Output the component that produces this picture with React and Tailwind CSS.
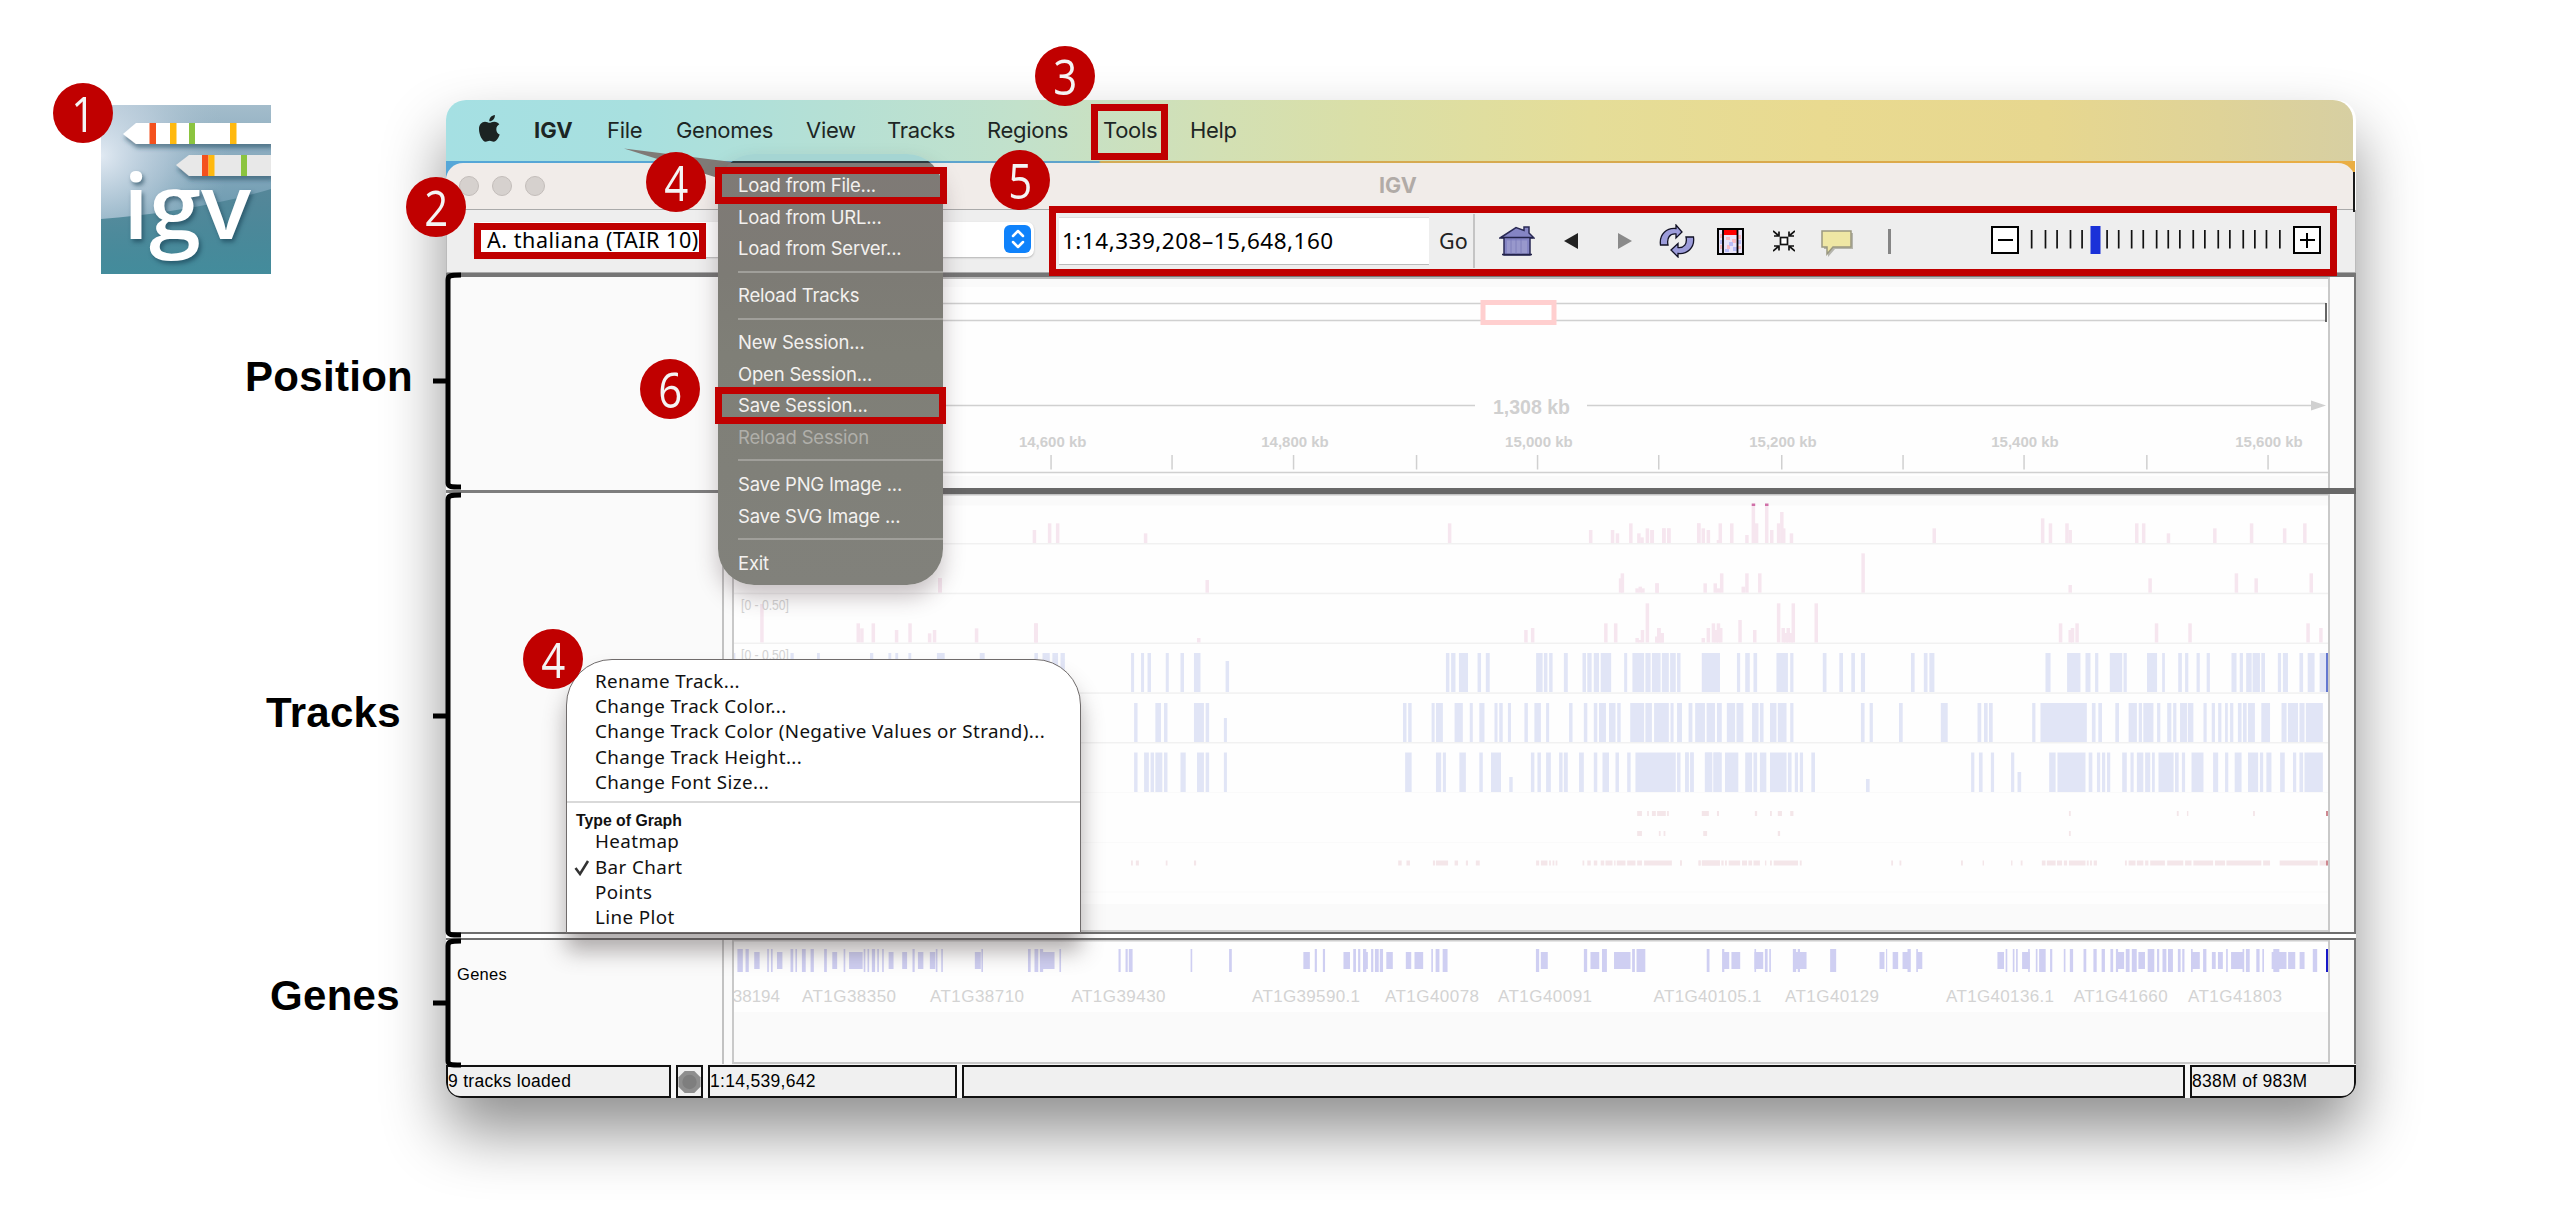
import React from "react";

const ARIAL = "font-['Liberation_Sans',Arial,sans-serif]";
const INTER = "font-[Inter,sans-serif]";
const NOTO = "font-['Noto_Sans','Open_Sans',sans-serif]";

/* ---------- track data: "start-end" spans, optional "@top" ---------- */
const spans = (s) =>
  s.split(",").map((p) => {
    const [r, t] = p.trim().split("@");
    const [a, b] = r.split("-").map(Number);
    return { a, b, t: t ? Number(t) : null };
  });

function Spans({ data, top, bottom, x0, k, fill }) {
  return (
    <g transform={`translate(${x0} 0) scale(${k} 1)`} fill={fill}>
      {spans(data).map((s, i) => {
        const y = s.t ?? top;
        return <rect key={i} x={s.a} y={y} width={s.b - s.a} height={bottom - y} />;
      })}
    </g>
  );
}

function Peaks({ data, bottom, x0, k }) {
  return (
    <g fill="#f6e6ef">
      {data.map(([x, y], i) => (
        <rect key={i} x={x0 + x * k - 1.7} y={380 + y / 3} width="3.5" height={bottom - 380 - y / 3} />
      ))}
    </g>
  );
}

const KA = 0.43367;
const KB = 0.45918;
const KC = 0.44643;

const P1L = [[77,450],[111,430],[129,430],[326,460],[1007,430],[1323,450],[1372,450],[1383,460],[1413,430],[1431,460],[1438,472],[1450,445],[1461,450],[1487,445],[1498,445],[1565,430]];
const P1R = [[4,450],[30,445],[41,445],[106,430],[116,445],[127,450],[149,480],[153,430],[178,430],[211,465],[225,376],[232,430],[254,376],[265,450],[280,430],[287,396],[291,445],[308,460],[619,445],[855,415],[872,430],[908,430],[915,450],[1060,430],[1075,430],[1129,460],[1230,445],[1310,430],[1382,445],[1426,430]];
const P2L = [[464,600],[1390,595],[1394,580],[1427,625],[1434,620],[1440,625],[1472,610]];
const P2R = [[15,610],[120,610],[142,610],[149,625],[156,580],[203,620],[211,580],[239,580],[464,520],[915,615],[1089,595],[1277,580],[1320,595],[1440,580]];
const P3L = [[81,730],[445,774],[1178,750],[1193,744],[1357,730],[1379,730],[1427,774],[1433,780],[1439,750],[1450,670],[1471,770],[1476,744],[1483,759]];
const P3R = [[15,770],[19,744],[26,759],[116,774],[127,744],[138,730],[144,750],[149,730],[154,744],[196,720],[228,750],[280,670],[290,744],[296,759],[301,744],[307,759],[312,670],[362,670],[894,730],[915,750],[920,744],[930,730],[1103,730],[1176,730],[1433,730],[1461,744]];
const P3X = [[887,792],[1123,850],[1132,865],[1160,850],[1217,870],[1250,850],[1298,880],[1310,870],[1413,865],[1558,850]];

const B1L = "210-217,233-240,248-256,290-297,324-332,355-370,428-436@661,936-944,948-958,966-987,1009-1017,1028-1037,1144-1159,1162-1170,1174-1182,1208-1217,1251-1259,1262-1272,1277-1289,1293-1317,1347-1354,1366-1393,1396-1408,1411-1431,1434-1450,1453-1466,1469-1477,1526-1568";
const B1R = "48-87,124-131,142-152,160-168,210-235,240-247,311-319,347-355,373-381,394-403,503-511,531-539,543-554,796-807,843-872,883-894,904-911,936-963,966-973,1017-1039,1050-1056,1085-1093,1100-1107,1125-1132,1147-1154,1201-1212,1219-1226,1233-1245,1247-1263,1266-1274,1302-1309,1313-1324,1349-1357,1367-1382,1393-1408";
const B1X = "818-822,957-965,1022-1029,1152-1160,1197-1204,1214-1221,1246-1253,1316-1335,1421-1433,1575-1592,1599-1610,1619-1629";
const B1Y = "77-85,96-111,119-130,137-145";
const B2L = "217-225,266-279,286-294,355-378,382-390,424-431@718,837-845,849-857,903-910,913-929,956-975,991-998,1013-1025,1048-1055,1059-1067,1079-1086,1117-1125,1140-1155,1167-1174,1220-1228,1254-1262,1277-1285,1289-1305,1312-1327,1331-1339,1361-1393,1396-1411,1416-1450,1454-1461,1469-1480,1496-1503,1511-1533,1538-1556,1561-1568";
const B2R = "0-4,19-27,34-54,58-76,81-91,102-120,123-138,157-171,174-182,196-210,213-232,240-247,394-402,413-420,477-485,568-583,648-656,662-670,673-681,767-774,785-886,897-905,911-919,948-956,977-995,999-1006,1009-1031,1039-1046,1061-1070,1074-1081,1089-1104,1106-1118,1140-1147,1158-1165,1172-1179,1187-1193,1198-1205,1215-1223,1226-1234,1237-1252,1266-1285,1310-1321,1324-1346,1349-1360,1363-1400";
const B3L = "217-225,240-251,255-263,266-282,286-294,324-336,362-378,382-390,424-431,842-857,913-925,929-936,967-982,1013-1021,1040-1063,1082-1090@777,1132-1140,1147-1155,1167-1178,1197-1205,1208-1217,1243-1254,1277-1285,1297-1312,1327-1335,1354-1362,1373-1466,1469-1477,1488-1496,1500-1507,1533-1550,1553-1568";
const B3R = "11-19,22-30,55-70,73-91,98-127,142-157,160-168,174-188,196-232,235-243,250-257,261-268,286-294,405-413@779,634-641,651-659,677-684,721-728,735-743@772,804-818,822-883,890-898,908-915,919-926,930-937,963-973,981-988,995-1009,1013-1024,1028-1034,1042-1075,1078-1086,1093-1100,1114-1140,1161-1172,1187-1194,1208-1223,1237-1259,1263-1270,1277-1288,1307-1317,1335-1342,1349-1357,1360-1400";
const RAL = "1377-1388,1400-1404,1411-1420,1423-1443,1446-1450,1526-1542,1561-1564";
const RAR = "48-62,81-85,163-168,196-200,213-222,240-247,847-851,1082-1086,1104-1107,1248-1252";
const RBL = "1377-1388,1427-1431,1438-1442,1530-1538";
const RBR = "51-59,213-218,847-851";
const RCL = "210-214,221-228,290-294,355-360,826-834,845-853,906-911,913-941,956-964,982-987,1005-1014,1144-1151,1155-1170,1174-1178,1182-1186,1189-1193,1251-1255,1262-1270,1277-1285,1293-1301,1304-1320,1324-1327,1330-1350,1354-1373,1377-1388,1393-1457,1476-1480,1519-1523,1526-1568";
const RCR = "0-4,40-45,48-87,90-95,98-102,106-131,135-146,149-157,160-174,185-188,196-200,204-257,261-265,460-464,478-482,612-616,659-662,721-724,742-746,788-796,799-818,821-832,836-843,847-883,886-890,893-897,901-908,969-973,977-992,995-1009,1013-1020,1024-1056,1061-1096,1100-1114,1118-1161,1165-1187,1190-1266,1270-1285,1306-1389,1393-1410";

const GTL = "69-79,84-90,124-127,131-134,167-172,176-179,188-195,204-210,229-234,265-268,302-305,309-312,317-323,327-330,336-339,392-396,435-438,445-448,519-522,605-610,617-624,627-633,663-666,772-776,785-789,791-798,905-908,976-981,1134-1138,1149-1153,1205-1210,1214-1218,1223-1229,1238-1242,1245-1252,1254-1260,1349-1352,1357-1364,1370-1379,1542-1548";
const GSL = "100-110,142-152,244-253,275-300,348-357,373-382,402-412,424-434,507-518,628-654,1113-1125,1187-1199,1225-1232,1266-1278,1302-1312,1318-1334,1551-1563";
const GTR = "80-86,113-122,168-173,176-192,304-309,332-336,391-394,410-415,418-421,461-467,470-474,529-540,631-633,670-676,686-689,849-852,862-865,868-871,890-893,904-907,910-922,930-934,955-958,966-972,991-996,1009-1015,1024-1030,1040-1045,1050-1054,1068-1075,1079-1088,1108-1120,1125-1129,1135-1142,1145-1154,1163-1168,1171-1175,1187-1190,1209-1215,1251-1254,1281-1284,1287-1294,1306-1312,1317-1320,1337-1348,1409-1417";
const GSR = "2-14,92-108,135-165,333-345,349-365,391-407,463-486,619-628,643-653,661-675,687-697,834-846,879-893,1053-1065,1091-1103,1187-1203,1225-1232,1236-1245,1260-1282,1334-1361,1364-1377,1385-1394";

const GENES = [["AT1G38350",802],["AT1G38710",930],["AT1G39430",1071.5],["AT1G39590.1",1252],["AT1G40078",1385],["AT1G40091",1498],["AT1G40105.1",1653.5],["AT1G40129",1785],["AT1G40136.1",1946],["AT1G41660",2073.7],["AT1G41803",2188]];

/* ---------- annotations ---------- */
function Badge({ n, at }) {
  return (
    <div className={`absolute flex size-[60px] items-center justify-center rounded-full bg-[#c00000] ${at}`}>
      <span className="block scale-x-[0.84] font-['Open_Sans',sans-serif] text-[50px] leading-[58px] text-[#f4f4f4]">{n}</span>
    </div>
  );
}

const Frame = ({ at }) => <div className={`absolute border-[7px] border-[#c00000] ${at}`} />;

const Label = ({ children, at }) => (
  <div className={`absolute text-[42px] leading-[48px] font-bold tracking-[0.3px] text-black ${ARIAL} ${at}`}>{children}</div>
);

function Bracket({ h, tick, at }) {
  return (
    <svg className={`absolute ${at}`} width="30" height={h} viewBox={`0 0 30 ${h}`} fill="none" stroke="#000" strokeWidth="5">
      <path d={`M28 3 C17 3 15 3.500 15 8 V${h - 7} C15 ${h - 3} 18 ${h - 3} 28 ${h - 3} M0 ${tick} H15`} />
    </svg>
  );
}

function Logo() {
  return (
    <div className="absolute left-[101px] top-[105px] h-[169px] w-[170px] overflow-hidden">
      <svg width="170" height="169" viewBox="0 0 170 169">
        <defs>
          <linearGradient id="sky" x1="0" y1="0" x2="0" y2="1">
            <stop offset="0" stopColor="#a3bccb" />
            <stop offset="0.35" stopColor="#86a9bd" />
            <stop offset="0.62" stopColor="#6d9bb0" />
            <stop offset="1" stopColor="#468b9d" />
          </linearGradient>
          <radialGradient id="glow" cx="0" cy="0.3" r="0.75">
            <stop offset="0" stopColor="#eaf0f8" stopOpacity="0.9" />
            <stop offset="0.5" stopColor="#c8d6e4" stopOpacity="0.55" />
            <stop offset="1" stopColor="#a5becd" stopOpacity="0" />
          </radialGradient>
          <linearGradient id="sea" x1="0" y1="0" x2="0" y2="1">
            <stop offset="0" stopColor="#4f8294" stopOpacity="0.85" />
            <stop offset="1" stopColor="#438c9c" />
          </linearGradient>
          <filter id="soft" x="-10%" y="-20%" width="130%" height="160%">
            <feDropShadow dx="1" dy="4" stdDeviation="2" floodColor="#234a60" floodOpacity="0.55" />
          </filter>
        </defs>
        <rect width="170" height="169" fill="url(#sky)" />
        <rect width="170" height="169" fill="url(#glow)" />
        <path d="M0 114 C50 110 110 102 170 84 V169 H0Z" fill="url(#sea)" />
        <g filter="url(#soft)">
          <path d="M22 29 L35 18 H171 V39 H35Z" fill="#fff" />
          <path d="M75 60 L88 50 H171 V71 H88Z" fill="#e8e8e8" />
        </g>
        <g>
          <path d="M48.500 18h6.500v21h-6.500zM101 50h6.500v21h-6.500z" fill="#f4511e" />
          <path d="M69 18h6.500v21h-6.500zM129 18h6.500v21h-6.500zM107.500 50h6v21h-6z" fill="#ffb90f" />
          <path d="M88 18h6v21h-6zM140 50h6v21h-6z" fill="#8bc43f" />
        </g>
      </svg>
      <span className="absolute left-[22px] top-[42px] origin-left scale-x-[1.04] font-['Open_Sans',sans-serif] text-[90px] leading-[114px] font-semibold tracking-[0px] text-white [text-shadow:2px_3px_4px_rgba(20,60,80,0.6)]">igv</span>
    </div>
  );
}

/* ---------- window chrome ---------- */
function MenuBar() {
  const items = [["File","w-[69px]"],["Genomes","w-[130px]"],["View","w-[81px]"],["Tracks","w-[100px]"],["Regions","w-[116px]"],["Tools","w-[87px]"],["Help","w-[60px]"]];
  return (
    <nav className={`flex h-[61px] w-[1907px] items-center rounded-t-[20px] bg-[linear-gradient(90deg,#a5e0e3_0%,#a8e0df_10%,#b5e0d5_20%,#c2e1cb_30%,#d2e0b5_40%,#dadfa7_48%,#e5dd98_60%,#e9da90_72%,#e7d78f_84%,#dfd398_93%,#d7cfa2_100%)] text-[22px] tracking-[-0.3px] text-[#1d2624] ${INTER}`}>
      <svg className="ml-[33px] mb-[4px]" width="21" height="27" viewBox="0 0 21 27" fill="#1c2322">
        <path d="M17.300 14.200c0-2.400 1.300-3.800 3-4.900-1.100-1.600-2.800-2.500-5-2.600-1.900-.1-3.600 1.100-4.700 1.100S7.700 6.700 6 6.700C2.800 6.800 0 9.500 0 14.200c0 5 3.300 12.500 6.700 12.500 1.500 0 2.200-1 4-1s2.300 1 4 1c2.600 0 4.900-3.800 6-7.200-2.200-.8-3.400-2.800-3.400-5.300zM14.400 4.500C15.500 3.200 16 1.700 15.900 0c-1.600.1-3.200 1-4.200 2.100-1 1.200-1.500 2.700-1.400 4.200 1.600.1 3.100-.7 4.100-1.800z" />
      </svg>
      <span className="ml-[34px] w-[73px] font-bold tracking-[0px]">IGV</span>
      {items.map(([t, w]) => (
        <span key={t} className={`${w} whitespace-nowrap`}>{t}</span>
      ))}
    </nav>
  );
}

function TitleBar() {
  return (
    <div className="flex h-[49px] w-[1909px] bg-[linear-gradient(90deg,#55a7d8_0%,#5fa3cb_34.2%,#d3ab55_34.300%,#d9a94c_70%,#eaae44_100%)] pt-[2px]">
      <div className={`flex flex-1 items-center rounded-t-[17px] border-b border-[#aaa] bg-[#f1ece9] ${INTER}`}>
        <div className="ml-[13px] flex gap-[13px]">
          {[0, 1, 2].map((i) => (
            <i key={i} className="size-5 rounded-full border border-[#c3bdba] bg-[#d6d1ce]" />
          ))}
        </div>
        <span className="mb-[2px] ml-[834px] text-[21.500px] font-bold text-[#b1aba7]">IGV</span>
        <i className="mt-[12px] ml-auto h-[40px] w-[2px] bg-[#1a1a1a]" />
      </div>
    </div>
  );
}

const HomeIcon = () => (
  <svg width="36" height="30" viewBox="0 0 36 30">
    <path d="M1 12 L17 1.500 L25 4.500 V1 H30 V7 L35 12 H31 V29 H5 V12Z" fill="#8585c4" stroke="#2a2a55" strokeWidth="1.500" />
    <path d="M8 14.500 H28 V27.500 H8Z" fill="#9898cc" />
    <path d="M2 11.500 H34 M3 28.500H33" stroke="#23234a" strokeWidth="1.500" />
    <path d="M12 13 V28 M17 13 V28 M22 13 V28" stroke="#7a7ab8" strokeWidth="0.800" />
  </svg>
);

const RefreshIcon = () => (
  <svg width="36" height="34" viewBox="0 0 36 34" fill="#9c9cda" stroke="#111125" strokeWidth="1.300">
    <path d="M1.500 21 C0 10 8 3.500 17 4.500 L17 1 L23 8 L17 14 L17 10 C11 9.500 7.500 13.500 9 21Z" />
    <path d="M34.500 13 C36 24 28 30.500 19 29.500 L19 33 L12 26 L19 19.500 L19 23.500 C25 24 28.500 20 27 13Z" />
  </svg>
);

const HeatIcon = () => (
  <svg width="27" height="27" viewBox="0 0 27 27">
    <rect x="1" y="1" width="25" height="25" fill="#e9e4f8" stroke="#000" strokeWidth="2" />
    <path d="M3 6h3v4H3zM9 9h4v3H9zM15 11h4v4h-4zM10 17h3v4h-3zM21 7h3v4h-3zM3 17h2v4H3zM21 18h3v3h-3z" fill="#f9bcc4" />
    <path d="M12 14h4v4h-4zM16 19h4v4h-4zM8 21h4v3H8zM3 12h3v4H3zM21 12h3v4h-3z" fill="#b9bdf8" />
    <rect x="6" y="2" width="15" height="5" fill="#f00" />
    <path d="M6 1V26M20.500 1V26" stroke="#000" strokeWidth="1.800" />
  </svg>
);

const FitIcon = () => (
  <svg width="22" height="22" viewBox="0 0 22 22" fill="none" stroke="#111" strokeWidth="1.700">
    <rect x="7.500" y="7.500" width="7" height="7" fill="#fff" />
    <path d="M0 1L6 6M22 1L16 6M0 21L6 16M22 21L16 16M6 1.500V6H1M16 1.500V6H21M6 20.500V16H1M16 20.500V16H21" />
  </svg>
);

const NoteIcon = () => (
  <svg width="32" height="27" viewBox="0 0 32 27">
    <path d="M3 3 H32 V19 H14 L7 27 V19 H3Z" fill="#b5b5ad" />
    <path d="M1 1 H30 V17 H12 L6 24 V17 H1Z" fill="#efe7a4" stroke="#9a9880" strokeWidth="1.500" />
  </svg>
);

const TICKS = [743,774,800,830,856,912,938,967,993,1023,1049,1075,1105,1131,1161,1187,1217,1243,1269,1299];

function ZoomControl() {
  return (
    <div className="flex items-center">
      <div className="flex h-[28px] w-[28px] items-center justify-center border-2 border-black bg-white"><i className="h-[2px] w-[15px] bg-black" /></div>
      <svg width="274" height="28" viewBox="2019 0 274 28">
        {TICKS.map((t) => (
          <rect key={t} x={1700 + t / 2.24 - 0.9} y="4" width="1.700" height="18.500" fill="#111" />
        ))}
        <rect x="2090.500" y="0" width="10" height="28" fill="#1a31d8" />
      </svg>
      <div className="relative flex h-[28px] w-[28px] items-center justify-center border-2 border-black bg-white">
        <i className="h-[2px] w-[15px] bg-black" />
        <i className="absolute h-[15px] w-[2px] bg-black" />
      </div>
    </div>
  );
}

function Toolbar() {
  return (
    <div className={`flex h-[62px] items-center border-x border-[#bbb] bg-[#eeeeee] text-black ${NOTO}`}>
      <div className="mb-[4px] ml-[27px] flex h-[35px] w-[560px] items-center rounded-[7px] bg-white pr-[3px] shadow-[0_1px_2px_rgba(0,0,0,0.25)]">
        <span className="mt-[2px] ml-[13px] flex-1 text-[21.500px] tracking-[0.55px] whitespace-nowrap">A. thaliana (TAIR 10)</span>
        <span className="flex h-[28px] w-[27px] items-center justify-center rounded-[6px] bg-[#0f82fb]">
          <svg width="14" height="20" viewBox="0 0 14 20" fill="none" stroke="#fff" strokeWidth="2.500" strokeLinecap="round" strokeLinejoin="round"><path d="M2 7L7 2L12 7M2 13L7 18L12 13" /></svg>
        </span>
      </div>
      <div className="ml-[25px] flex h-[48px] w-[370px] items-center border-y border-t-[#ddd] border-b-[#bbb] bg-white pl-[3px]">
        <span className="text-[22.500px] tracking-[0.5px] whitespace-nowrap">1:14,339,208–15,648,160</span>
      </div>
      <span className="ml-[10px] w-[34px] text-[21.500px] text-[#222]">Go</span>
      <i className="h-[54px] w-[2px] bg-[#c4c4c4]" />
      <div className="ml-[24px] flex items-center">
        <HomeIcon />
        <svg className="ml-[29px]" width="14" height="16" viewBox="0 0 14 16"><path d="M14 0V16L0 8Z" fill="#222" /></svg>
        <svg className="ml-[40px]" width="14" height="16" viewBox="0 0 14 16"><path d="M0 0V16L14 8Z" fill="#8a8a8a" /></svg>
        <div className="ml-[27px]"><RefreshIcon /></div>
        <div className="ml-[22px]"><HeatIcon /></div>
        <div className="ml-[29px]"><FitIcon /></div>
        <div className="mt-[5px] ml-[26px]"><NoteIcon /></div>
        <i className="ml-[35px] h-[25px] w-[3px] bg-[#858585]" />
      </div>
      <div className="mb-[2px] ml-[100px]"><ZoomControl /></div>
    </div>
  );
}

/* ---------- panels ---------- */
function Panel({ h, name, children }) {
  return (
    <section className={`flex ${h} border-r-2 border-[#777] bg-[#fafafa]`}>
      <div className={`w-[278px] border-r-2 border-[#c2c2c2] text-[16.500px] tracking-[0.3px] text-black ${ARIAL}`}>{name}</div>
      <div className="ml-[8px] w-[1598px] border-x-2 border-[#c9c9c9]">{children}</div>
    </section>
  );
}

function Ruler() {
  const labels = [["14,600 kb",1052.7],["14,800 kb",1295],["15,000 kb",1538.900],["15,200 kb",1783],["15,400 kb",2025],["15,600 kb",2269]];
  const ticks = [929,1051,1172,1293.5,1416.5,1537.5,1658.7,1781.7,1903,2024,2146.8,2268];
  return (
    <svg className={`block ${ARIAL}`} width="1594" height="211" viewBox="734 277 1594 211" fontWeight="700" fill="#d0d0d0" textAnchor="middle">
      <rect x="734" y="277" width="1594" height="2" fill="#bdbdbd" />
      <rect x="734" y="287" width="1594" height="189" fill="#fefefe" />
      <path d="M738 303.500H2326M738 320.500H2326M944 405.500H1475M1587 405.500H2314M734 472.500H2328" stroke="#d0d0d0" strokeWidth="1.500" fill="none" />
      <path d="M2326 303V322" stroke="#333" strokeWidth="1.500" />
      <rect x="1483" y="302.500" width="71" height="20" fill="#fff" stroke="#ffcfcf" strokeWidth="5" />
      <path d="M2311 400.500L2326 405.500L2311 410.500Z" />
      <text x="1531.500" y="413.500" fontSize="19.500">1,308 kb</text>
      {labels.map(([t, x]) => <text key={t} x={x} y="447" fontSize="15">{t}</text>)}
      {ticks.map((x) => <rect key={x} x={x - 0.7} y="455" width="1.500" height="14.500" />)}
    </svg>
  );
}

function TracksChart() {
  const blue = "#e1e5f6";
  const red = "#f4e6e9";
  return (
    <svg className={`block ${ARIAL}`} width="1594" height="438" viewBox="734 494 1594 438">
      <rect x="734" y="494" width="1594" height="1.500" fill="#c4c4c4" />
      <rect x="734" y="505.500" width="1594" height="398.500" fill="#fefefe" />
      <rect x="734" y="930" width="1594" height="2" fill="#cfcfcf" />
      {[543,592.7,642.500,692.300,742].map((y) => <rect key={y} x="734" y={y} width="1594" height="1.500" fill="#f1f1f1" />)}
      {[792,842,891.500].map((y) => <rect key={y} x="734" y={y} width="1594" height="1" fill="#fafafa" />)}
      <Peaks data={P1L} bottom={543} x0={1000} k={KC} />
      <Peaks data={P1R} bottom={543} x0={1650} k={KB} />
      <Peaks data={P2L} bottom={592.7} x0={1000} k={KC} />
      <Peaks data={P2R} bottom={592.7} x0={1650} k={KB} />
      <Peaks data={P3L} bottom={642.500} x0={1000} k={KC} />
      <Peaks data={P3R} bottom={642.500} x0={1650} k={KB} />
      <g fill="#f6e6ef">
        <rect x="938" y="578" width="4" height="14.700" />
        {P3X.map(([x, y]) => <rect key={x} x={398.300 + x * 0.408} y={340 + y / 3} width="3.500" height={302.500 - y / 3} />)}
      </g>
      <path d="M1751.700 503.500h3.500v2.500h-3.500zM1765 503.500h3.500v2.500h-3.500z" fill="#d070a8" />
      <Spans data={B1X} top={653} bottom={692} x0={400} k={0.408} fill={blue} />
      <Spans data={B1Y} top={653} bottom={692} x0={1000} k={KC} fill={blue} />
      <Spans data={B1L} top={653} bottom={692} x0={1040} k={KA} fill={blue} />
      <Spans data={B1R} top={653} bottom={692} x0={1680} k={KB} fill={blue} />
      <Spans data={B2L} top={703} bottom={742} x0={1040} k={KA} fill={blue} />
      <Spans data={B2R} top={703} bottom={742} x0={1680} k={KB} fill={blue} />
      <Spans data={B3L} top={752.500} bottom={792} x0={1040} k={KA} fill={blue} />
      <Spans data={B3R} top={752.500} bottom={792} x0={1680} k={KB} fill={blue} />
      <Spans data={RAL} top={811} bottom={816} x0={1040} k={KA} fill={red} />
      <Spans data={RAR} top={811} bottom={816} x0={1680} k={KB} fill={red} />
      <Spans data={RBL} top={831} bottom={836} x0={1040} k={KA} fill={red} />
      <Spans data={RBR} top={831} bottom={836} x0={1680} k={KB} fill={red} />
      <Spans data={RCL} top={860.500} bottom={865.500} x0={1040} k={KA} fill={red} />
      <Spans data={RCR} top={860.500} bottom={865.500} x0={1680} k={KB} fill={red} />
      <rect x="2326" y="653" width="2" height="39" fill="#6478d0" />
      <path d="M2326 811h2v5h-2zM2326 860.500h2v5h-2z" fill="#cf8890" />
      <g fontSize="14" fill="#d3d3d3">
        <text x="741" y="610" textLength="48" lengthAdjust="spacingAndGlyphs">[0 - 0.50]</text>
        <text x="741" y="659.500" textLength="48" lengthAdjust="spacingAndGlyphs">[0 - 0.50]</text>
      </g>
    </svg>
  );
}

function GenesChart() {
  const f = "#cfcff2";
  return (
    <svg className={`block ${ARIAL}`} width="1594" height="124" viewBox="734 940 1594 124" fontSize="17" fill="#d3d3d3">
      <rect x="734" y="940" width="1594" height="1.500" fill="#cfcfcf" />
      <rect x="734" y="942" width="1594" height="70" fill="#fefefe" />
      <rect x="734" y="1062" width="1594" height="2" fill="#c8c8c8" />
      <Spans data={GTL} top={949} bottom={972} x0={700} k={0.5421} fill={f} />
      <Spans data={GSL} top={952} bottom={969} x0={700} k={0.5421} fill={f} />
      <Spans data={GTR} top={949} bottom={972} x0={1540} k={0.54847} fill={f} />
      <Spans data={GSR} top={952} bottom={969} x0={1540} k={0.54847} fill={f} />
      <rect x="2326" y="949" width="2" height="23" fill="#1818c8" />
      <text x="780" y="1002" textAnchor="end">38194</text>
      {GENES.map(([t, x]) => (
        <text key={t} x={x} y="1002" textLength={t.length > 9 ? 108 : 94}>{t}</text>
      ))}
    </svg>
  );
}

function StatusBar() {
  const cell = "flex items-center border-2 border-[#111] bg-[#f0f0f0]";
  return (
    <footer className={`flex h-[34px] gap-[5px] overflow-hidden rounded-b-[16px] bg-[#f7f7f7] pt-px text-[17.500px] tracking-[0.3px] text-black ${ARIAL}`}>
      <div className={`${cell} w-[225px] rounded-bl-[14px]`}>9 tracks loaded</div>
      <div className={`${cell} w-[27px] justify-center`}>
        <svg width="24" height="24" viewBox="0 0 24 24"><path d="M7 0.500H17L23.500 7V17L17 23.500H7L0.500 17V7Z" fill="#8e8e8e" /><circle cx="12" cy="12" r="7.500" fill="#7e7e7e" /></svg>
      </div>
      <div className={`${cell} w-[249px]`}>1:14,539,642</div>
      <div className={`${cell} w-[1223px]`} />
      <div className={`${cell} flex-1 rounded-br-[14px]`}>838M of 983M</div>
    </footer>
  );
}

/* ---------- floating menus ---------- */
function FileMenu() {
  const groups = [
    ["Load from File...", "Load from URL...", "Load from Server..."],
    ["Reload Tracks"],
    ["New Session...", "Open Session...", "Save Session...", "Reload Session"],
    ["Save PNG Image ...", "Save SVG Image ..."],
    ["Exit"],
  ];
  return (
    <div className={`absolute left-[718px] top-[154px] h-[431px] w-[225px] rounded-[36px] bg-[linear-gradient(180deg,#a5d5d3_0px,#a5d5d3_7px,#2c3a40_7px,#2c3a40_9px,#7f7a76_9px,#7d7b75_120px,#7f7f77_200px,#81817b_100%)] pt-[15px] pl-5 text-[18.500px] tracking-[-0.2px] text-[#f3f1ef] shadow-[0_12px_22px_rgba(60,40,45,0.28)] ${INTER}`}>
      {groups.map((g, i) => (
        <div key={i} className={i ? "mt-[7px] border-t-2 border-[#a09f9a] pt-[6.700px]" : ""}>
          {g.map((t) => (
            <div key={t} className={`h-[31.500px] leading-[32px] whitespace-nowrap ${t === "Reload Session" ? "text-[#b0afaa]" : ""}`}>{t}</div>
          ))}
        </div>
      ))}
    </div>
  );
}

function TrackMenu() {
  const row = "h-[25.200px] pl-[28px] leading-[25.200px] whitespace-nowrap";
  return (
    <div className={`absolute left-[566px] top-[659px] h-[274px] w-[515px] rounded-t-[46px] border border-[#6f6b6b] bg-white pt-[9px] text-[18.800px] tracking-[0.4px] text-[#111] shadow-[0_18px_22px_rgba(70,60,60,0.42)] ${NOTO}`}>
      {["Rename Track...", "Change Track Color...", "Change Track Color (Negative Values or Strand)...", "Change Track Height...", "Change Font Size..."].map((t) => (
        <div key={t} className={row}>{t}</div>
      ))}
      <div className="mt-[6px] border-t-2 border-[#d9d9d9]" />
      <div className={`mt-[8px] pl-[9px] text-[15.800px] leading-[20px] font-bold tracking-[0px] ${ARIAL}`}>Type of Graph</div>
      <div className="mt-[-1.500px]">
        {["Heatmap", "Bar Chart", "Points", "Line Plot"].map((t) => (
          <div key={t} className={`relative ${row}`}>
            {t === "Bar Chart" && (
              <svg className="absolute top-[5px] left-[7px]" width="16" height="16" viewBox="0 0 16 16" fill="none" stroke="#333" strokeWidth="2.500"><path d="M1.500 8L6 14L14 1" /></svg>
            )}
            {t}
          </div>
        ))}
      </div>
    </div>
  );
}

export default function App() {
  return (
    <div className="relative h-[1221px] w-[2549px] overflow-hidden bg-white pt-[100px] pl-[446px]">
      <main className="w-[1910px] rounded-[20px] shadow-[0_34px_62px_0px_rgba(0,0,0,0.44)]">
        <MenuBar />
        <TitleBar />
        <Toolbar />
        <div className="h-[5px] border-t border-[#aaa] bg-[#757575]" />
        <Panel h="h-[211px]"><Ruler /></Panel>
        <div className="flex h-[6px] items-center bg-[#fafafa]">
          <i className="h-[3px] w-[278px] bg-[#7d7d7d]" />
          <i className="h-[6px] flex-1 bg-[#686868]" />
        </div>
        <Panel h="h-[438px]"><TracksChart /></Panel>
        <div className="h-[8px] border-y-2 border-[#6f6f6f] bg-white" />
        <Panel h="h-[124px]" name={<div className="pt-[22px] pl-[11px]">Genes</div>}><GenesChart /></Panel>
        <StatusBar />
      </main>

      <Logo />
      <svg className="absolute left-[620px] top-[145px]" width="124" height="36" viewBox="620 145 124 36"><path d="M624 148.500L740 163V178H718Z" fill="#7f7a76" /></svg>
      <FileMenu />
      <TrackMenu />

      <Label at="left-[245px] top-[353px]">Position</Label>
      <Label at="left-[266px] top-[689px]">Tracks</Label>
      <Label at="left-[270px] top-[972px]">Genes</Label>
      <Bracket h={218} tick={109} at="left-[433px] top-[272px]" />
      <Bracket h={446} tick={224} at="left-[433px] top-[492px]" />
      <Bracket h={130} tick={65} at="left-[433px] top-[938px]" />

      <Frame at="left-[474px] top-[223px] h-[36px] w-[232px]" />
      <Frame at="left-[1091px] top-[104px] h-[56px] w-[77px]" />
      <Frame at="left-[1049px] top-[206px] h-[70px] w-[1288px]" />
      <Frame at="left-[715px] top-[167px] h-[37px] w-[232px]" />
      <Frame at="left-[715px] top-[387px] h-[37px] w-[231px]" />

      <Badge n="1" at="left-[53px] top-[83px]" />
      <Badge n="2" at="left-[406px] top-[177px]" />
      <Badge n="3" at="left-[1035px] top-[46px]" />
      <Badge n="4" at="left-[646px] top-[152px]" />
      <Badge n="5" at="left-[990px] top-[150px]" />
      <Badge n="6" at="left-[640px] top-[359px]" />
      <Badge n="4" at="left-[523px] top-[629px]" />
    </div>
  );
}
